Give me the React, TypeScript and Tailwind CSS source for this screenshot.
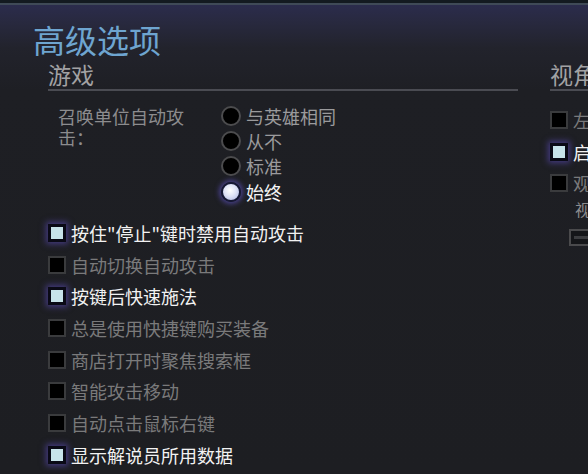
import React from "react";

const font = { fontFamily: '"Noto Sans CJK SC", "Noto Sans", sans-serif' };

type Opt = { label: string; on?: boolean };

const radios: Opt[] = [
  { label: "与英雄相同" },
  { label: "从不" },
  { label: "标准" },
  { label: "始终", on: true },
];

const gameChecks: Opt[] = [
  { label: "按住\"停止\"键时禁用自动攻击", on: true },
  { label: "自动切换自动攻击" },
  { label: "按键后快速施法", on: true },
  { label: "总是使用快捷键购买装备" },
  { label: "商店打开时聚焦搜索框" },
  { label: "智能攻击移动" },
  { label: "自动点击鼠标右键" },
  { label: "显示解说员所用数据", on: true },
];

const cameraChecks: Opt[] = [
  { label: "左键点击小地图移动视角" },
  { label: "启用视角边缘平移", on: true },
  { label: "观战时视角跟随英雄" },
];

function Radio({ on }: { on?: boolean }) {
  if (on) {
    return (
      <span className="size-5 shrink-0 rounded-full border-2 border-[#161835] bg-[radial-gradient(circle_at_45%_40%,#ffffff_0%,#dfe3f7_45%,#a9b2e0_100%)] shadow-[0_0_5px_2px_rgba(92,82,190,0.65)]" />
    );
  }
  return (
    <span className="size-5 shrink-0 rounded-full border-2 border-[#4c4c4e] bg-black shadow-[inset_0_0_2px_rgba(0,0,0,0.9)]" />
  );
}

function Box({ on }: { on?: boolean }) {
  if (on) {
    return (
      <span className="size-[18px] shrink-0 border-[3px] border-[#0a0a16] bg-[#c7e3ea] shadow-[0_0_6px_2px_rgba(98,80,200,0.55)]" />
    );
  }
  return <span className="size-[18px] shrink-0 border-2 border-[#3a3b3d] bg-black" />;
}

function CheckRow({ label, on }: Opt) {
  return (
    <div className="flex h-[31.7px] items-center gap-[5px] whitespace-nowrap">
      <Box on={on} />
      <span className={on ? "text-[#f2f2f2]" : "text-[#7a7a7b]"}>{label}</span>
    </div>
  );
}

function SectionTitle({ children }: { children: React.ReactNode }) {
  return (
    <div>
      <h2 className="text-[23px] leading-[26px] text-[#a2a2a4] whitespace-nowrap">{children}</h2>
      <div className="mt-[2px] h-[2px] bg-[#4a4b52]" />
    </div>
  );
}

export default function App() {
  return (
    <div
      style={font}
      className="relative h-[474px] w-[588px] overflow-hidden bg-[linear-gradient(to_bottom,#2c2d50_0px,#28293f_22px,#22232c_48px,#1e1f24_90px,#1d1e22_100%)]"
    >
      <div className="h-[3px] bg-[#131a20]" />
      <div className="h-[2px] bg-[#3f4a57]" />

      <h1 className="pl-[33px] pt-[19px] text-[32px] leading-[30px] text-[#6ea5d0]">高级选项</h1>

      <div className="mt-[7px] flex gap-[32px] pl-[48px] text-[18px] leading-[22px]">
        <section className="w-[470px] shrink-0">
          <SectionTitle>游戏</SectionTitle>

          <div className="mt-[15px] flex pl-[10px]">
            <div className="w-[163px] shrink-0 pr-[33px] leading-[21px] text-[#8c8c8e]">
              召唤单位自动攻击：
            </div>
            <div className="-mt-[3px] flex flex-col">
              {radios.map((r) => (
                <div key={r.label} className="flex h-[25.3px] items-center gap-[5px] whitespace-nowrap">
                  <Radio on={r.on} />
                  <span className={r.on ? "text-[#f4f4f4]" : "text-[#9a9a9c]"}>{r.label}</span>
                </div>
              ))}
            </div>
          </div>

          <div className="mt-[13px] flex flex-col">
            {gameChecks.map((c) => (
              <CheckRow key={c.label} {...c} />
            ))}
          </div>
        </section>

        <section className="w-[300px] shrink-0">
          <SectionTitle>视角</SectionTitle>
          <div className="mt-[13px] flex flex-col">
            {cameraChecks.map((c) => (
              <CheckRow key={c.label} {...c} />
            ))}
          </div>
          <div className="pl-[25px] text-[16px] leading-[20px] text-[#8c8c8e] whitespace-nowrap">视角移动速度</div>
          <div className="ml-[19px] mt-[10px] flex h-[17px] w-[140px] items-center border-2 border-[#4a4a4c] bg-[#151619] px-[3px]">
            <div className="h-[3px] w-full bg-[#3c3d40]" />
          </div>
        </section>
      </div>
    </div>
  );
}
